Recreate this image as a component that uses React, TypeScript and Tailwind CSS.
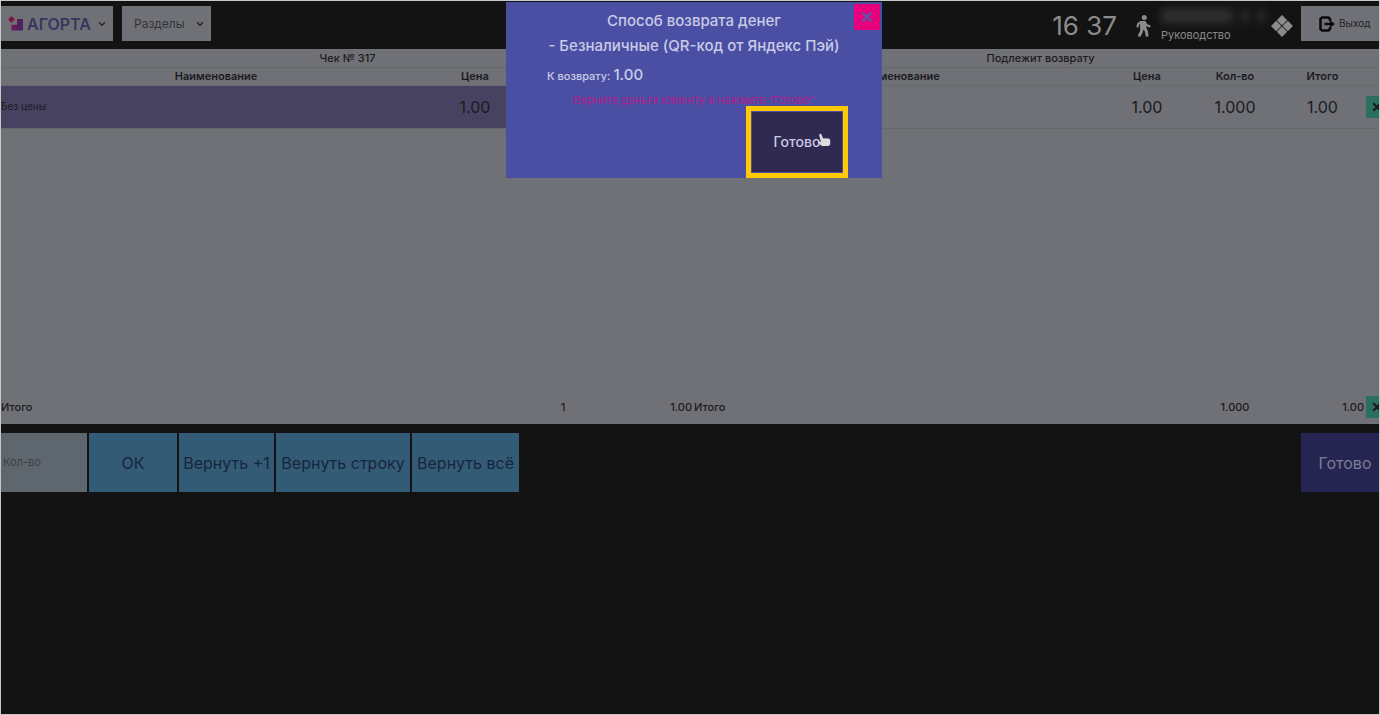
import { useState } from 'react';
import { ChevronDown } from 'lucide-react';

interface Line {
  name: string;
  price: string;
  count?: string;
  total?: string;
}

interface ReceiptTableProps {
  title: string;
  columns: string[];
  lines: Line[];
  count: string;
  total: string;
  selected?: boolean;
  removable?: boolean;
}

const receiptLines: Line[] = [{ name: 'Без цены', price: '1.00' }];
const refundLines: Line[] = [{ name: '', price: '1.00', count: '1.000', total: '1.00' }];

const actions = [
  { label: 'ОК', width: 'w-[88px]' },
  { label: 'Вернуть +1', width: 'w-[95px]' },
  { label: 'Вернуть строку', width: 'w-[134px]' },
  { label: 'Вернуть всё', width: 'w-[107px]' },
];

function Cross({ className }: { className: string }) {
  return (
    <svg viewBox="0 0 12 12" className={className} fill="none" stroke="currentColor" strokeWidth="2.6">
      <path d="M1.5 1.5 10.5 10.5M10.5 1.5 1.5 10.5" />
    </svg>
  );
}

function Logo() {
  return (
    <svg viewBox="0 0 16 16" className="h-4 w-4">
      <defs>
        <linearGradient id="logo" x1="0" y1="0" x2="1" y2="0.3">
          <stop offset="0" stopColor="#7c1546" />
          <stop offset="1" stopColor="#452369" />
        </linearGradient>
      </defs>
      <path d="M3.5 0 6.900 3.400 3.500 6.800.100 3.400Z" fill="#7c1546" />
      <path d="M9 3H15V14.500H3.500V8.800H9Z" fill="url(#logo)" />
    </svg>
  );
}

function Walker() {
  return (
    <svg viewBox="0 0 15 22" className="h-[22px] w-[15px]" fill="none" stroke="#8b8b8b" strokeLinecap="round" strokeLinejoin="round">
      <circle cx="8.300" cy="2.600" r="2.500" fill="#8b8b8b" stroke="none" />
      <path d="M5.200 7H8.800L9.500 13.500H5.200Z" fill="#8b8b8b" strokeWidth="2.200" />
      <path d="M5 7.300 2.300 8.800 1.500 11.500M9 7.500 10.500 10 13.500 11.300" strokeWidth="2.200" />
      <path d="M8.300 13 10.300 16 11 20.300M6 13 5.300 17 3.500 20.300" strokeWidth="3" />
    </svg>
  );
}

function Diamonds() {
  return (
    <svg viewBox="0 0 22 22" className="h-[22px] w-[22px]" fill="#8b8b8b">
      <path d="M11 0 16.200 5.200 11 10.400 5.800 5.200Z" />
      <path d="M5.200 5.800 10.400 11 5.200 16.200 0 11Z" />
      <path d="M16.800 5.800 22 11 16.800 16.200 11.600 11Z" />
      <path d="M11 11.600 16.200 16.800 11 22 5.800 16.800Z" />
    </svg>
  );
}

function ExitIcon() {
  return (
    <svg viewBox="0 0 16 16" className="h-4 w-4" fill="none" stroke="#0b0b0c" strokeWidth="2.6">
      <path d="M11 5V3L9.500 1.500H3L1.500 3V13L3 14.500H9.500L11 13V11" />
      <path d="M5.500 8H12" />
      <path d="M11 4.300 16 8 11 11.700Z" fill="#0b0b0c" stroke="none" />
    </svg>
  );
}

function HandCursor() {
  return (
    <svg viewBox="0 0 14 14" className="h-[14px] w-[14px]">
      <path
        d="M2.500 1C3.300 .4 4.200 .8 4.500 1.600L6 5.200 11.500 5.600C12.700 5.800 13.200 6.600 13.200 7.600V11.500L11.500 13H5L1 9.800C.6 9 1.300 8.200 2.200 8.500L4 9.200 2.200 2.400Z"
        fill="#dcdcdf"
      />
    </svg>
  );
}

function ReceiptTable({ title, columns, lines, count, total, selected, removable }: ReceiptTableProps) {
  return (
    <table className="h-[356px] w-full table-fixed border-collapse text-[#1b1b1f]">
      <caption className="h-[19px] border-b border-[#67686c] text-[11px] leading-[18px] font-medium">{title}</caption>
      <colgroup>
        <col />
        <col className="w-[88px]" />
        <col className="w-[88px]" />
        <col className="w-[87px]" />
        {removable && <col className="w-[21px]" />}
      </colgroup>
      <thead className="text-[11px] leading-4">
        <tr className="h-[17px] border-b border-[#68696d]">
          {columns.map((column, i) => (
            <th key={i} className="font-semibold">
              {column}
            </th>
          ))}
          {removable && <td />}
        </tr>
      </thead>
      <tbody>
        {lines.map((line, i) => (
          <tr
            key={i}
            className={
              selected
                ? 'h-[43px] border-b border-[#67686c] bg-[#484261] text-center text-base'
                : 'h-[43px] border-b border-[#67686c] text-center text-base'
            }
          >
            <td className="text-left text-[10px]">{line.name}</td>
            <td>{line.price}</td>
            <td>{line.count}</td>
            <td>{line.total}</td>
            {removable && (
              <td>
                <button aria-label="Удалить" className="flex h-[22px] w-full items-center justify-center bg-[#2b6f5f]">
                  <Cross className="h-[10px] w-[10px]" />
                </button>
              </td>
            )}
          </tr>
        ))}
        <tr>
          <td />
        </tr>
      </tbody>
      <tfoot className="text-[11px] font-medium">
        <tr className="h-[34px] text-center">
          <td className="text-left">Итого</td>
          <td />
          <td>{count}</td>
          <td className="pr-[2px] text-right">{total}</td>
          {removable && (
            <td>
              <button aria-label="Удалить всё" className="flex h-[22px] w-full items-center justify-center bg-[#2b6f5f]">
                <Cross className="h-[10px] w-[10px]" />
              </button>
            </td>
          )}
        </tr>
      </tfoot>
    </table>
  );
}

function RefundDialog({ onClose }: { onClose: () => void }) {
  return (
    <div className="absolute top-px right-[-8px] left-0 flex justify-center">
      <div
        role="dialog"
        aria-labelledby="refund-title"
        className="relative h-[176px] w-[376px] bg-[#4a4fa4] px-[41px] text-[#c9cbe6]"
      >
        <button
          aria-label="Закрыть"
          onClick={onClose}
          className="absolute top-[2px] right-[2px] flex h-[26px] w-[26px] items-center justify-center bg-[#e6007c] text-[#6650a3]"
        >
          <Cross className="h-3 w-3" />
        </button>
        <h2 id="refund-title" className="pt-[7px] text-center text-[15px] leading-6 font-medium">
          Способ возврата денег
        </h2>
        <p className="text-center text-[15px] leading-[26px] font-medium whitespace-nowrap">
          - Безналичные (QR-код от Яндекс Пэй)
        </p>
        <p className="mt-1 text-[11px] leading-6 font-medium">
          К возврату: <span className="text-[15px]">1.00</span>
        </p>
        <p className="mt-1 text-center text-[11px] leading-4 text-[#b0208c]">Верните деньги клиенту и нажмите “Готово”</p>
        <div className="absolute right-[34px] bottom-0 border-[5px] border-[#ffcb00] p-px">
          <button onClick={onClose} className="block h-[60px] w-[90px] bg-[#302a50] text-sm font-medium">
            Готово
          </button>
          <span className="absolute top-[22px] left-[66px]">
            <HandCursor />
          </span>
        </div>
      </div>
    </div>
  );
}

export default function App() {
  const [open, setOpen] = useState(true);

  return (
    <div className="relative min-h-screen overflow-hidden border border-[#c5cac8] bg-[#131313] font-['Inter','Liberation_Sans',sans-serif]">
      <header className="flex h-12 items-center pb-[3px]">
        <button className="flex h-[35px] w-28 items-center bg-[#707176] pl-[7px] text-base font-semibold text-[#37355f]">
          <Logo />
          <span className="ml-[3px] flex-1 text-left">АГОРТА</span>
          <ChevronDown className="mr-[6px] h-[10px] w-[10px] text-[#222]" strokeWidth={3} />
        </button>
        <button className="ml-[9px] flex h-[35px] w-[89px] items-center bg-[#707176] pl-3 text-xs text-[#33343a]">
          <span className="flex-1 text-left">Разделы</span>
          <ChevronDown className="mr-[6px] h-[10px] w-[10px] text-[#222]" strokeWidth={3} />
        </button>
        <div className="ml-auto flex items-center text-[#8b8b8b]">
          <div className="flex items-center pt-1">
            <time className="text-[26px] leading-8">16 37</time>
            <span className="ml-[19px]">
              <Walker />
            </span>
            <div className="ml-[10px] w-[104px]">
              <div className="flex h-[14px] gap-2 blur-xs">
                <span className="w-[74px] bg-[#303030]" />
                <span className="w-2 bg-[#2b2b2b]" />
                <span className="w-2 bg-[#2b2b2b]" />
              </div>
              <p className="mt-1 text-[11px] leading-4">Руководство</p>
            </div>
            <span className="ml-[6px]">
              <Diamonds />
            </span>
          </div>
          <button className="ml-2 flex h-[35px] w-[78px] items-center gap-1 bg-[#707176] pl-[18px] text-[10px] text-[#222226]">
            <ExitIcon />
            Выход
          </button>
        </div>
      </header>

      <main>
        <div className="-mr-2 grid grid-cols-2 bg-[#707176]">
          <ReceiptTable
            title="Чек № 317"
            columns={['Наименование', 'Цена', '', '']}
            lines={receiptLines}
            count="1"
            total="1.00"
            selected
          />
          <ReceiptTable
            title="Подлежит возврату"
            columns={['Наименование', 'Цена', 'Кол-во', 'Итого']}
            lines={refundLines}
            count="1.000"
            total="1.00"
            removable
          />
        </div>
        <div className="mt-[9px] flex h-[59px] gap-[2px] text-base">
          <input
            aria-label="Кол-во"
            placeholder="Кол-во"
            className="w-[86px] bg-[#5f676e] pl-[2px] text-[11px] placeholder:text-[#3c4147]"
          />
          {actions.map((action) => (
            <button key={action.label} className={`${action.width} bg-[#345b76] whitespace-nowrap text-[#14263d]`}>
              {action.label}
            </button>
          ))}
          <button className="ml-auto w-[78px] bg-[#262552] pl-[10px] text-[#7c7c92]">Готово</button>
        </div>
      </main>

      {open && <RefundDialog onClose={() => setOpen(false)} />}
    </div>
  );
}
